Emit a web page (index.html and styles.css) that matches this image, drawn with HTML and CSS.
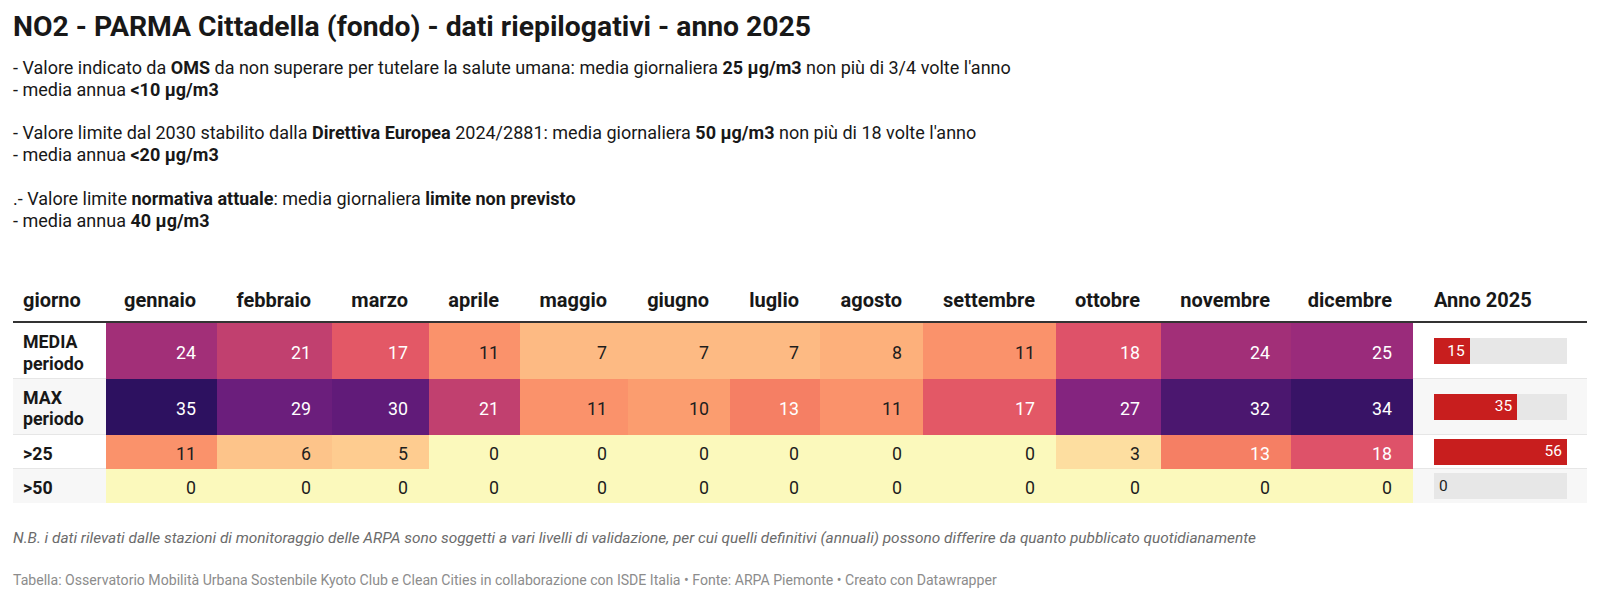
FILE: index.html
```html
<!DOCTYPE html>
<html lang="it">
<head>
<meta charset="utf-8">
<title>NO2 - PARMA Cittadella (fondo)</title>
<link rel="stylesheet" href="styles.css">
</head>
<body>
<div class="chart">
  <h1 class="title">NO2 - PARMA Cittadella (fondo) - dati riepilogativi - anno 2025</h1>
  <div class="intro">
    <p>- Valore indicato da <b>OMS</b> da non superare per tutelare la salute umana: media giornaliera <b>25 µg/m3</b> non più di 3/4 volte l'anno<br>- media annua <b>&lt;10 µg/m3</b></p>
    <p>- Valore limite dal 2030 stabilito dalla <b>Direttiva Europea</b> 2024/2881: media giornaliera <b>50 µg/m3</b> non più di 18 volte l'anno<br>- media annua <b>&lt;20 µg/m3</b></p>
    <p>.- Valore limite <b>normativa attuale</b>: media giornaliera <b>limite non previsto</b><br>- media annua <b>40 µg/m3</b></p>
  </div>
  <table class="heat">
    <colgroup>
      <col class="c1"><col class="c2"><col class="c3"><col class="c4"><col class="c5"><col class="c6"><col class="c7"><col class="c8"><col class="c9"><col class="c10"><col class="c11"><col class="c12"><col class="c13"><col class="c14">
    </colgroup>
    <thead>
      <tr>
        <th class="lbl">giorno</th><th>gennaio</th><th>febbraio</th><th>marzo</th><th>aprile</th><th>maggio</th><th>giugno</th><th>luglio</th><th>agosto</th><th>settembre</th><th>ottobre</th><th>novembre</th><th>dicembre</th><th class="anno">Anno 2025</th>
      </tr>
    </thead>
    <tbody>
      <tr>
        <th class="lbl">MEDIA<br>periodo</th>
        <td class="v24">24</td><td class="v21">21</td><td class="v17">17</td><td class="v11">11</td><td class="v7">7</td><td class="v7">7</td><td class="v7">7</td><td class="v8">8</td><td class="v11">11</td><td class="v18">18</td><td class="v24">24</td><td class="v25">25</td>
        <td class="anno"><div class="bar"><div class="fill" style="width:26.79%">15</div></div></td>
      </tr>
      <tr class="alt">
        <th class="lbl">MAX<br>periodo</th>
        <td class="v35">35</td><td class="v29">29</td><td class="v30">30</td><td class="v21">21</td><td class="v11">11</td><td class="v10">10</td><td class="v13">13</td><td class="v11">11</td><td class="v17">17</td><td class="v27">27</td><td class="v32">32</td><td class="v34">34</td>
        <td class="anno"><div class="bar"><div class="fill" style="width:62.5%">35</div></div></td>
      </tr>
      <tr>
        <th class="lbl">&gt;25</th>
        <td class="v11">11</td><td class="v6">6</td><td class="v5">5</td><td class="v0">0</td><td class="v0">0</td><td class="v0">0</td><td class="v0">0</td><td class="v0">0</td><td class="v0">0</td><td class="v3">3</td><td class="v13">13</td><td class="v18">18</td>
        <td class="anno"><div class="bar"><div class="fill" style="width:100%">56</div></div></td>
      </tr>
      <tr class="alt last">
        <th class="lbl">&gt;50</th>
        <td class="v0">0</td><td class="v0">0</td><td class="v0">0</td><td class="v0">0</td><td class="v0">0</td><td class="v0">0</td><td class="v0">0</td><td class="v0">0</td><td class="v0">0</td><td class="v0">0</td><td class="v0">0</td><td class="v0">0</td>
        <td class="anno"><div class="bar"><span class="zero">0</span></div></td>
      </tr>
    </tbody>
  </table>
  <p class="note">N.B. i dati rilevati dalle stazioni di monitoraggio delle ARPA sono soggetti a vari livelli di validazione, per cui quelli definitivi (annuali) possono differire da quanto pubblicato quotidianamente</p>
  <p class="credit">Tabella: Osservatorio Mobilità Urbana Sostenbile Kyoto Club e Clean Cities in collaborazione con ISDE Italia • Fonte: ARPA Piemonte • Creato con Datawrapper</p>
</div>
</body>
</html>
```
FILE: styles.css
```css
html, body {
  margin: 0;
  padding: 0;
  background: #ffffff;
}
body {
  font-family: Roboto, "Liberation Sans", sans-serif;
  color: #181818;
}
.chart {
  padding: 11px 13px 0 13px;
}
.title {
  margin: 0;
  font-size: 28.3px;
  line-height: 32px;
  font-weight: 700;
  color: #181818;
}
.intro {
  margin-top: 14px;
  font-size: 18px;
  line-height: 21.8px;
}
.intro p {
  margin: 0 0 21.8px 0;
}
.intro p:last-child {
  margin-bottom: 0;
}
.intro b {
  font-weight: 700;
}
.heat {
  margin-top: 49px;
  width: 1574px;
  table-layout: fixed;
  border-collapse: separate;
  border-spacing: 0;
}
.c1 { width: 93px; }
.c2 { width: 111px; }
.c3 { width: 115px; }
.c4 { width: 97px; }
.c5 { width: 91px; }
.c6 { width: 108px; }
.c7 { width: 102px; }
.c8 { width: 90px; }
.c9 { width: 103px; }
.c10 { width: 133px; }
.c11 { width: 105px; }
.c12 { width: 130px; }
.c13 { width: 122px; }
.c14 { width: 174px; }

.heat thead th {
  font-size: 20px;
  line-height: 24px;
  font-weight: 700;
  text-align: right;
  padding: 8px 21px 9px 0;
  border-bottom: 2px solid #333333;
  color: #181818;
  white-space: nowrap;
}
.heat thead th.lbl {
  text-align: left;
  padding-left: 10px;
  padding-right: 0;
}
.heat thead th.anno {
  text-align: left;
  padding-left: 21px;
}
.heat tbody th,
.heat tbody td {
  font-size: 17.8px;
  line-height: 21.33px;
  padding: 8px 21px 4px 0;
  vertical-align: middle;
  border-bottom: 1px solid transparent;
}
.heat tbody th.lbl {
  font-weight: 700;
  text-align: left;
  padding-left: 10px;
  padding-right: 0;
  border-bottom-color: #e6e6e6;
  background: #ffffff;
}
.heat tbody td {
  text-align: right;
  color: #1d1d1d;
}
.heat tbody td.anno {
  text-align: left;
  padding: 1px 20px 0 21px;
  border-bottom-color: #e6e6e6;
  background: #ffffff;
}
.heat tbody tr.alt th.lbl,
.heat tbody tr.alt td.anno {
  background: #f7f7f7;
}
.heat tbody tr.last th.lbl,
.heat tbody tr.last td.anno,
.heat tbody tr.last td {
  border-bottom-color: transparent;
}

.bar {
  height: 26px;
  background: #e7e7e7;
  display: flex;
  align-items: center;
}
.fill {
  height: 100%;
  background: #c81e1e;
  color: #ffffff;
  font-size: 15.5px;
  display: flex;
  align-items: center;
  justify-content: flex-end;
  padding-right: 5px;
  box-sizing: border-box;
}
.zero {
  font-size: 15.5px;
  color: #1d1d1d;
  padding-left: 5px;
}

/* heatmap scale */
.v0 { background: #fbf9bc; }
.v3 { background: #fddea0; }
.v5 { background: #fecc90; }
.v6 { background: #fdc48a; }
.v7 { background: #fdba83; }
.v8 { background: #fdb07b; }
.v10 { background: #fb9d6f; }
.v11 { background: #fa926b; }
.v13 { background: #f57f64; color: #ffffff !important; }
.v17 { background: #e35866; color: #ffffff !important; }
.v18 { background: #de5269; color: #ffffff !important; }
.v21 { background: #c1406f; color: #ffffff !important; }
.v24 { background: #a22f78; color: #ffffff !important; }
.v25 { background: #9a2b7b; color: #ffffff !important; }
.v27 { background: #84247f; color: #ffffff !important; }
.v29 { background: #6b1e7c; color: #ffffff !important; }
.v30 { background: #611b79; color: #ffffff !important; }
.v32 { background: #4b176f; color: #ffffff !important; }
.v34 { background: #381366; color: #ffffff !important; }
.v35 { background: #2d1160; color: #ffffff !important; }

.note {
  margin: 25px 0 0 0;
  font-size: 15.4px;
  line-height: 21px;
  font-style: italic;
  color: #6b6b6b;
}
.credit {
  margin: 22px 0 0 0;
  font-size: 14.1px;
  line-height: 18px;
  color: #8c8c8c;
}
```
